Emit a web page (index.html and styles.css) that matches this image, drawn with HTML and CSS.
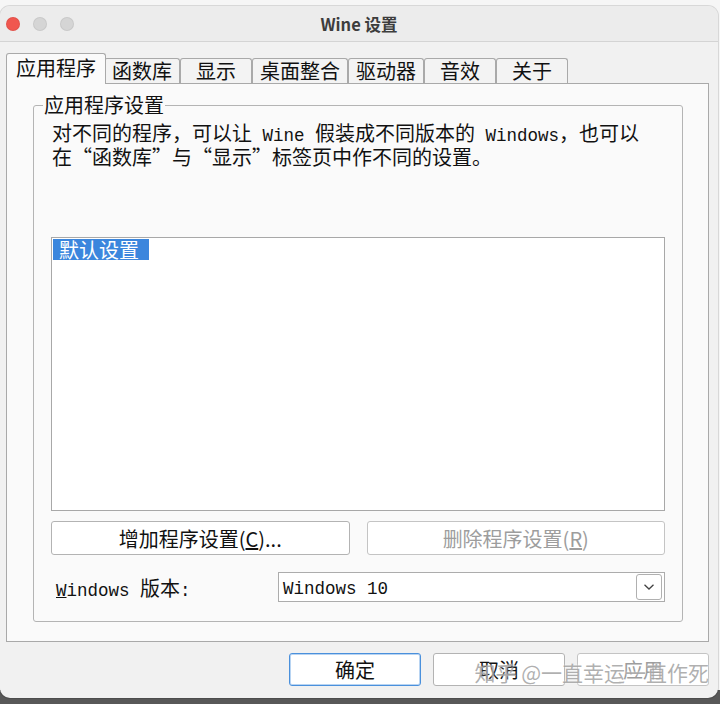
FILE: index.html
```html
<!DOCTYPE html>
<html lang="zh-CN">
<head>
    <meta charset="UTF-8">
    <title>Wine 设置</title>
    <link rel="stylesheet" href="styles.css">
</head>
<body>
    <div class="window">
        <div class="titlebar">
            <div class="lights">
                <span class="light red"></span>
                <span class="light"></span>
                <span class="light"></span>
            </div>
            <div class="title">Wine 设置</div>
        </div>

        <div class="content">
            <div class="tabs">
                <div class="tab active">应用程序</div>
                <div class="tab">函数库</div>
                <div class="tab">显示</div>
                <div class="tab">桌面整合</div>
                <div class="tab">驱动器</div>
                <div class="tab">音效</div>
                <div class="tab">关于</div>
            </div>

            <div class="panel">
                <fieldset class="group">
                    <legend>应用程序设置</legend>
                    <div class="desc">
                        <div>对不同的程序，可以让<span class="lat"> Wine </span>假装成不同版本的<span class="lat"> Windows</span>，也可以</div>
                        <div>在“函数库”与“显示”标签页中作不同的设置。</div>
                    </div>

                    <div class="listbox">
                        <span class="item selected">默认设置</span>
                    </div>

                    <div class="btn-row">
                        <button class="btn">增加程序设置(<u>C</u>)...</button>
                        <button class="btn disabled">删除程序设置(<u>R</u>)</button>
                    </div>

                    <div class="version-row">
                        <div class="version-label"><span class="lat"><u>W</u>indows </span>版本<span class="lat">:</span></div>
                        <div class="combo">
                            <span class="lat combo-text">Windows 10</span>
                            <span class="drop">
                                <svg width="12" height="8" viewBox="0 0 12 8"><path d="M1.5 1.8 L6 6 L10.5 1.8" fill="none" stroke="#444" stroke-width="1.3"/></svg>
                            </span>
                        </div>
                    </div>
                </fieldset>
            </div>

            <div class="actions">
                <button class="btn action default">确定</button>
                <button class="btn action">取消</button>
                <button class="btn action disabled">应用</button>
                <div class="watermark">知乎 @一直幸运一直作死</div>
            </div>
        </div>
    </div>
</body>
</html>
```

FILE: styles.css
```css
:root {
    --cjk: "Noto Sans CJK SC", "Noto Sans", sans-serif;
    --mono: "Liberation Mono", "DejaVu Sans Mono", monospace;
    --line: #a9a9a9;
    --panel: #fafafa;
}

body {
    margin: 0;
    height: 704px;
    overflow: hidden;
    background: linear-gradient(to bottom, #f6f6f6 0, #f6f6f6 690px, #585858 690px);
    font-family: var(--cjk);
    color: #111;
}

.window {
    width: 718px;
    height: 692px;
    margin: 6px 2px 0 0;
    background: #f1f1f1;
    border-radius: 10px;
    box-shadow: 0 0 0 1px rgba(0, 0, 0, 0.12);
    overflow: hidden;
}

.titlebar {
    height: 35px;
    border-bottom: 1px solid #d4d4d4;
    background: #ececec;
    display: flex;
    align-items: center;
    position: relative;
}

.lights {
    display: flex;
    gap: 13px;
    padding-left: 6px;
}

.light {
    width: 14px;
    height: 14px;
    border-radius: 50%;
    background: #d5d5d5;
    box-shadow: inset 0 0 0 1px rgba(0, 0, 0, 0.06);
}

.light.red {
    background: #f0574f;
}

.title {
    position: absolute;
    left: 0;
    right: 0;
    text-align: center;
    font-size: 16.5px;
    font-weight: 700;
    color: #3d3d3d;
}

.content {
    padding: 11px 9px 0 6px;
    position: relative;
}

.tabs {
    display: flex;
    align-items: flex-end;
    height: 30px;
    padding-left: 2px;
}

.tab {
    height: 25px;
    min-width: 72px;
    box-sizing: border-box;
    padding: 0 7px;
    border: 1px solid var(--line);
    border-bottom: none;
    border-radius: 3px 3px 0 0;
    background: #f3f3f3;
    font-size: 20px;
    line-height: 23px;
    text-align: center;
}

.tab.active {
    height: 31px;
    margin: 0 -2px -1px;
    padding: 0 9px;
    background: var(--panel);
    position: relative;
    z-index: 1;
    line-height: 28px;
}

.panel {
    height: 559px;
    box-sizing: border-box;
    border: 1px solid var(--line);
    background: var(--panel);
    padding: 10px 25px 0 26px;
}

.group {
    margin: 0;
    padding: 6px 17px 19px 17px;
    border: 1px solid #b4b4b4;
    border-radius: 3px;
}

.group legend {
    margin-left: -8px;
    padding: 0 1px;
    font-size: 20px;
    line-height: 22px;
}

.desc {
    height: 115px;
    padding-left: 1px;
    font-size: 20px;
    line-height: 21px;
}

.lat {
    font-family: var(--mono);
    font-size: 17.5px;
    line-height: 1;
}

.listbox {
    height: 274px;
    box-sizing: border-box;
    border: 1px solid #a8a8a8;
    background: #fff;
    padding: 1px;
}

.item {
    display: inline-block;
    height: 21px;
    line-height: 21px;
    padding: 0 10px 0 6px;
    font-size: 20px;
}

.item.selected {
    background: #3b86dd;
    color: #fff;
}

.btn-row {
    display: grid;
    grid-template-columns: 1fr 1fr;
    gap: 17px;
    margin-top: 10px;
}

.btn {
    height: 34px;
    border: 1px solid #b3b3b3;
    border-radius: 3px;
    background: #fff;
    font-family: var(--cjk);
    font-size: 20px;
    color: #111;
    padding: 0;
}

.btn.disabled {
    color: #9d9d9d;
    border-color: #c4c4c4;
}

.version-row {
    display: flex;
    align-items: center;
    margin-top: 17px;
}

.version-label {
    width: 222px;
    padding-left: 5px;
    font-size: 20px;
}

.combo {
    flex: 1;
    height: 30px;
    box-sizing: border-box;
    border: 1px solid #acacac;
    background: #fff;
    display: flex;
    align-items: center;
    justify-content: space-between;
    padding: 0 2px 0 4px;
}

.combo-text {
    padding-top: 5px;
}

.drop {
    width: 26px;
    height: 26px;
    box-sizing: border-box;
    border: 1px solid #b0b0b0;
    border-radius: 3px;
    display: flex;
    align-items: center;
    justify-content: center;
}

.actions {
    display: flex;
    justify-content: flex-end;
    gap: 12px;
    margin-top: 11px;
    position: relative;
}

.btn.action {
    width: 132px;
    height: 33px;
}

.btn.default {
    border-color: #4a90dc;
    box-shadow: inset 0 0 0 1px #b8d4f2;
}

.watermark {
    position: absolute;
    right: 0;
    top: 4px;
    font-size: 21px;
    color: rgba(150, 150, 150, 0.75);
    text-shadow: 0 0 2px rgba(255, 255, 255, 0.9);
    pointer-events: none;
    white-space: nowrap;
}
```
